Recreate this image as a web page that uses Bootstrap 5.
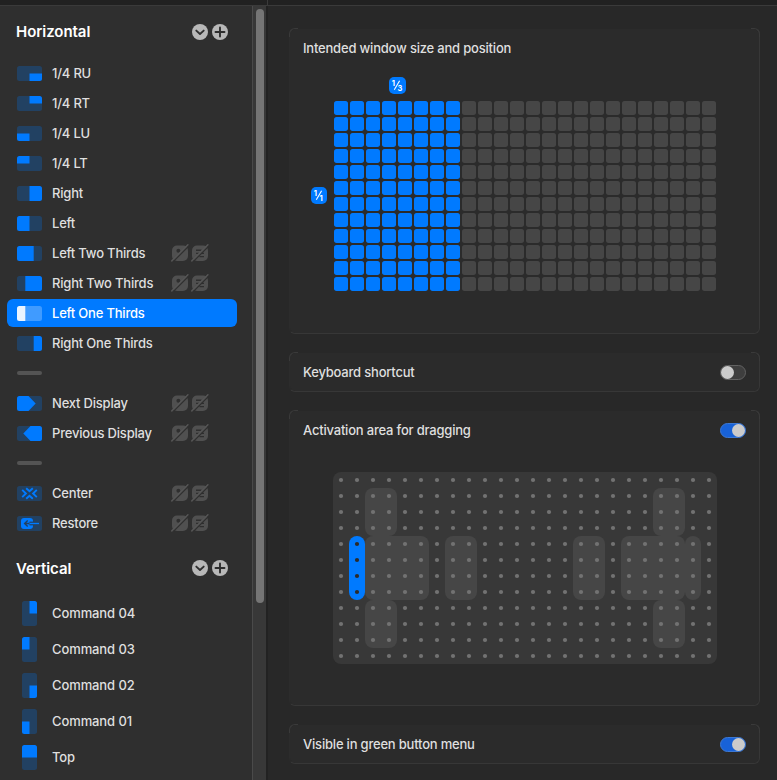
<!DOCTYPE html>
<html lang="en" data-bs-theme="dark">
<head>
<meta charset="utf-8">
<meta name="viewport" content="width=device-width, initial-scale=1">
<title>Window layouts</title>
<link href="https://cdn.jsdelivr.net/npm/bootstrap@5.3.0/dist/css/bootstrap.min.css" rel="stylesheet">
<style>
  body { font-family: Inter, "Liberation Sans", sans-serif; font-size: 13px; line-height: 16px; letter-spacing: -.2px; color: #dfdfdf; background: #282828; font-weight: 450; }
  svg { display: block; flex: none; }
  .titlebar { height: 6px; background: #212121; border-bottom: 1px solid #3a3a3a; }
  .titlebar-side { width: 268px; border-right: 1px solid #3a3a3a; }
  .sidebar { width: 253px; background: #2f2f2f; border-right: 1px solid #4a4a4a; }
  .track { width: 15px; background: #383838; border-right: 2px solid #222; padding: 3px 0 0 3px; }
  .thumb { width: 8px; height: 594px; border-radius: 4px; background: #757575; }
  .group-head { height: 52px; padding: 0 24px 1px 16px; }
  .group-head h2 { font-size: 15px; font-weight: 600; letter-spacing: -.05px; line-height: 20px; }
  .group-second { height: 57px; padding-top: 3px; }
  .group-second h2 { padding-top: 2px; }
  .action-row { height: 30px; padding: 0 43px 0 17px; gap: 10px; }
  .action-row.picked { height: 28px; margin: 1px 15px 1px 7px; padding: 0 0 0 10px; border-radius: 6px; background: #007aff; color: #fff; }
  .tall-row { height: 36px; padding-left: 22px; gap: 15px; letter-spacing: -.1px; }
  .divider { width: 25px; height: 4px; border-radius: 2px; background: #545454; }
  .pane { padding: 22px 17px 0 21px; gap: 18px; }
  .panel { width: 471px; background: #2b2b2b; border: 1px solid #373737; border-top-color: transparent; border-left-color: #2c2c2c; border-radius: 6px; background-clip: padding-box; }
  .panel-row { height: 38px; padding: 0 13px; }
  .corner-l, .corner-r { position: absolute; top: -1px; width: 9px; height: 9px; border-top: 1px solid #3a3a3a; }
  .corner-l { left: -1px; border-left: 1px solid #3a3a3a; border-top-left-radius: 6px; }
  .corner-r { right: -1px; border-right: 1px solid #3a3a3a; border-top-right-radius: 6px; }
  .size-panel { height: 306px; }
  .area-panel { height: 296px; }
  .switch { width: 26px; height: 15px; border-radius: 8px; background: #3e3e3e; border: 1px solid #626262; }
  .switch.on { background: #1862d8; border-color: #3d78d2; justify-content: flex-end; }
  .knob { width: 13px; height: 13px; border-radius: 50%; background: #cbcbcb; }
  .ratio-chip { width: 17px; height: 17px; border-radius: 5px; background: #007aff; letter-spacing: 0; }
  .chip-top { margin: 10px 0 7px 99px; }
  .chip-side { width: 16px; margin: 0 7px 3px 21px; }
  .area-map { margin: 23px 0 0 43px; }
</style>
</head>
<body class="vh-100 overflow-hidden d-flex flex-column">
<svg width="0" height="0" class="position-absolute" aria-hidden="true">
  <defs>
    <clipPath id="wide"><rect width="25" height="15" rx="2.5"/></clipPath>
    <clipPath id="tall"><rect width="15" height="25" rx="2.5"/></clipPath>
    <symbol id="head-icons" viewBox="0 0 36 16">
      <circle cx="8" cy="8" r="8" fill="#b8b8b8"/><circle cx="28" cy="8" r="8" fill="#b8b8b8"/>
      <path d="M4.3 6.6 8 10l3.7-3.4M28 3.5v9M23.5 8h9" fill="none" stroke="#2f2f2f" stroke-width="1.9" stroke-linecap="round" stroke-linejoin="round"/>
    </symbol>
    <symbol id="hidden-icons" viewBox="0 0 38 18">
      <g fill="#505050">
        <rect x="1" y="1.5" width="16" height="15.5" rx="5"/><rect x="21" y="1.5" width="16" height="15.5" rx="5"/>
      </g>
      <circle cx="7.4" cy="6.8" r="2" fill="#2f2f2f"/>
      <path d="M25 6.2h5.5M25 9.4h3.5M28.5 12.6h4.5M30 9.4h3" stroke="#2f2f2f" stroke-width="1.4"/>
      <path d="M1.5 18.3 18.5 1.3M21.5 18.3 38.5 1.3" stroke="#2f2f2f" stroke-width="1.3"/>
      <path d="M.8 16.9 16.9 .8M20.8 16.9 36.9 .8" stroke="#555" stroke-width="1.5" stroke-linecap="round"/>
    </symbol>
  </defs>
</svg>
<div class="titlebar d-flex flex-shrink-0"><div class="titlebar-side"></div></div>
<div class="d-flex flex-grow-1 overflow-hidden">
  <nav class="sidebar flex-shrink-0 overflow-hidden">
    <div class="group-head d-flex align-items-center justify-content-between"><h2 class="m-0">Horizontal</h2><svg width="36" height="16"><use href="#head-icons"/></svg></div>
    <div class="action-row d-flex align-items-center"><svg width="25" height="15"><g clip-path="url(#wide)"><path fill="#224162" d="M0 0h25v15H0z"/><path fill="#007aff" d="M12.5 7.5H25V15H12.5z"/></g></svg><span>1/4 RU</span></div>
    <div class="action-row d-flex align-items-center"><svg width="25" height="15"><g clip-path="url(#wide)"><path fill="#224162" d="M0 0h25v15H0z"/><path fill="#007aff" d="M12.5 0H25v7.5H12.5z"/></g></svg><span>1/4 RT</span></div>
    <div class="action-row d-flex align-items-center"><svg width="25" height="15"><g clip-path="url(#wide)"><path fill="#224162" d="M0 0h25v15H0z"/><path fill="#007aff" d="M0 7.5h12.5V15H0z"/></g></svg><span>1/4 LU</span></div>
    <div class="action-row d-flex align-items-center"><svg width="25" height="15"><g clip-path="url(#wide)"><path fill="#224162" d="M0 0h25v15H0z"/><path fill="#007aff" d="M0 0h12.5v7.5H0z"/></g></svg><span>1/4 LT</span></div>
    <div class="action-row d-flex align-items-center"><svg width="25" height="15"><g clip-path="url(#wide)"><path fill="#224162" d="M0 0h25v15H0z"/><path fill="#007aff" d="M12.5 0H25v15H12.5z"/></g></svg><span>Right</span></div>
    <div class="action-row d-flex align-items-center"><svg width="25" height="15"><g clip-path="url(#wide)"><path fill="#224162" d="M0 0h25v15H0z"/><path fill="#007aff" d="M0 0h12.5v15H0z"/></g></svg><span>Left</span></div>
    <div class="action-row d-flex align-items-center"><svg width="25" height="15"><g clip-path="url(#wide)"><path fill="#224162" d="M0 0h25v15H0z"/><path fill="#007aff" d="M0 0h16.7v15H0z"/></g></svg><span>Left Two Thirds</span><svg class="ms-auto" width="38" height="18"><use href="#hidden-icons"/></svg></div>
    <div class="action-row d-flex align-items-center"><svg width="25" height="15"><g clip-path="url(#wide)"><path fill="#224162" d="M0 0h25v15H0z"/><path fill="#007aff" d="M8.3 0H25v15H8.3z"/></g></svg><span>Right Two Thirds</span><svg class="ms-auto" width="38" height="18"><use href="#hidden-icons"/></svg></div>
    <div class="action-row picked d-flex align-items-center"><svg width="25" height="15"><g clip-path="url(#wide)"><path fill="#409bff" d="M0 0h25v15H0z"/><path fill="#ebf4ff" d="M0 0h8.3v15H0z"/></g></svg><span>Left One Thirds</span></div>
    <div class="action-row d-flex align-items-center"><svg width="25" height="15"><g clip-path="url(#wide)"><path fill="#224162" d="M0 0h25v15H0z"/><path fill="#007aff" d="M16.7 0H25v15h-8.3z"/></g></svg><span>Right One Thirds</span></div>
    <div class="action-row d-flex align-items-center"><div class="divider"></div></div>
    <div class="action-row d-flex align-items-center"><svg width="25" height="15"><g clip-path="url(#wide)"><path fill="#224162" d="M0 0h25v15H0z"/><path fill="#007aff" d="M0 0h11.5l7.2 7.5-7.2 7.5H0z"/></g></svg><span>Next Display</span><svg class="ms-auto" width="38" height="18"><use href="#hidden-icons"/></svg></div>
    <div class="action-row d-flex align-items-center"><svg width="25" height="15"><g clip-path="url(#wide)"><path fill="#224162" d="M0 0h25v15H0z"/><path fill="#007aff" d="M25 0H13.5L6.3 7.5l7.2 7.5H25z"/></g></svg><span>Previous Display</span><svg class="ms-auto" width="38" height="18"><use href="#hidden-icons"/></svg></div>
    <div class="action-row d-flex align-items-center"><div class="divider"></div></div>
    <div class="action-row d-flex align-items-center"><svg width="25" height="15"><rect width="25" height="15" rx="2.5" fill="#224162"/><path d="m9.2 2.2 3.3 3.1 3.3-3.1M9.2 12.8l3.3-3.1 3.3 3.1M5.2 3.9l3.7 3.6-3.7 3.6M19.8 3.9l-3.7 3.6 3.7 3.6" fill="none" stroke="#007aff" stroke-width="1.9"/></svg><span>Center</span><svg class="ms-auto" width="38" height="18"><use href="#hidden-icons"/></svg></div>
    <div class="action-row d-flex align-items-center"><svg width="25" height="15"><rect width="25" height="15" rx="2.5" fill="#224162"/><rect x="4" y="2" width="12" height="11" rx="3" fill="#007aff"/><path d="M12.5 5.6H17v3.8h-4.5z" fill="#224162"/><path d="M10.7 4.4 7.6 7.5l3.1 3.1M8 7.5h5" fill="none" stroke="#224162" stroke-width="1.4"/><path d="M12.5 7.5H22" stroke="#007aff" stroke-width="1.3"/></svg><span>Restore</span><svg class="ms-auto" width="38" height="18"><use href="#hidden-icons"/></svg></div>
    <div class="group-head group-second d-flex align-items-center justify-content-between"><h2 class="m-0">Vertical</h2><svg width="36" height="16"><use href="#head-icons"/></svg></div>
    <div class="tall-row d-flex align-items-center"><svg width="15" height="25"><g clip-path="url(#tall)"><path fill="#224162" d="M0 0h15v25H0z"/><path fill="#007aff" d="M7.5 0H15v12.5H7.5z"/></g></svg><span>Command 04</span></div>
    <div class="tall-row d-flex align-items-center"><svg width="15" height="25"><g clip-path="url(#tall)"><path fill="#224162" d="M0 0h15v25H0z"/><path fill="#007aff" d="M0 0h7.5v12.5H0z"/></g></svg><span>Command 03</span></div>
    <div class="tall-row d-flex align-items-center"><svg width="15" height="25"><g clip-path="url(#tall)"><path fill="#224162" d="M0 0h15v25H0z"/><path fill="#007aff" d="M7.5 12.5H15V25H7.5z"/></g></svg><span>Command 02</span></div>
    <div class="tall-row d-flex align-items-center"><svg width="15" height="25"><g clip-path="url(#tall)"><path fill="#224162" d="M0 0h15v25H0z"/><path fill="#007aff" d="M0 12.5h7.5V25H0z"/></g></svg><span>Command 01</span></div>
    <div class="tall-row d-flex align-items-center"><svg width="15" height="25"><g clip-path="url(#tall)"><path fill="#224162" d="M0 0h15v25H0z"/><path fill="#007aff" d="M0 0h15v12.5H0z"/></g></svg><span>Top</span></div>
  </nav>
  <div class="track flex-shrink-0"><div class="thumb"></div></div>
  <main class="pane d-flex flex-column flex-grow-1">
    <section class="panel size-panel position-relative flex-shrink-0">
      <i class="corner-l"></i><i class="corner-r"></i>
      <div class="panel-row d-flex align-items-center"><span>Intended window size and position</span></div>
      <div class="ratio-chip chip-top">
        <svg width="17" height="17" fill="#fff" font-size="7.5" font-weight="700"><text x="2.7" y="8.6">1</text><text x="8.6" y="14">3</text><path d="M5.3 12.8 10.6 3.8" stroke="#fff" stroke-width="1.1"/></svg>
      </div>
      <div class="d-flex align-items-center">
        <div class="ratio-chip chip-side flex-shrink-0">
          <svg width="16" height="17" fill="#fff" font-size="7.5" font-weight="700"><text x="2.7" y="8.6">1</text><text x="8.6" y="14">1</text><path d="M5.3 12.8 10.6 3.8" stroke="#fff" stroke-width="1.1"/></svg>
        </div>
        <svg width="384" height="192">
          <defs>
            <pattern id="cell" width="16" height="16" patternUnits="userSpaceOnUse"><rect width="14" height="14" rx="2.7" fill="#464646"/></pattern>
            <pattern id="cell-on" width="16" height="16" patternUnits="userSpaceOnUse"><rect width="14" height="14" rx="2.7" fill="#007aff"/></pattern>
          </defs>
          <path d="M128 0h256v192H128z" fill="url(#cell)"/><path d="M0 0h128v192H0z" fill="url(#cell-on)"/>
        </svg>
      </div>
    </section>
    <section class="panel position-relative flex-shrink-0">
      <i class="corner-l"></i><i class="corner-r"></i>
      <div class="panel-row d-flex align-items-center justify-content-between"><span>Keyboard shortcut</span><div class="switch d-flex"><div class="knob"></div></div></div>
    </section>
    <section class="panel area-panel position-relative flex-shrink-0">
      <i class="corner-l"></i><i class="corner-r"></i>
      <div class="panel-row d-flex align-items-center justify-content-between"><span>Activation area for dragging</span><div class="switch on d-flex"><div class="knob"></div></div></div>
      <svg class="area-map" width="384" height="192">
        <defs><pattern id="dots" width="16" height="16" patternUnits="userSpaceOnUse"><circle cx="8" cy="8" r="2.1" fill="#727272"/></pattern></defs>
        <rect width="384" height="192" rx="8" fill="#383838"/>
        <g fill="#464646">
          <rect x="32" y="16" width="32" height="48" rx="8"/><rect x="32" y="64" width="64" height="64" rx="8"/><rect x="32" y="128" width="32" height="48" rx="8"/>
          <rect x="112" y="64" width="32" height="64" rx="8"/><rect x="240" y="64" width="32" height="64" rx="8"/>
          <rect x="288" y="64" width="64" height="64" rx="8"/><rect x="352" y="64" width="16" height="64" rx="8"/>
          <rect x="320" y="16" width="32" height="48" rx="8"/><rect x="320" y="128" width="32" height="48" rx="8"/>
        </g>
        <rect width="384" height="192" fill="url(#dots)"/>
        <rect x="16" y="64" width="16" height="64" rx="8" fill="#007aff"/>
        <g fill="#2b2b2b"><circle cx="24" cy="72" r="2.1"/><circle cx="24" cy="88" r="2.1"/><circle cx="24" cy="104" r="2.1"/><circle cx="24" cy="120" r="2.1"/></g>
      </svg>
    </section>
    <section class="panel position-relative flex-shrink-0">
      <i class="corner-l"></i><i class="corner-r"></i>
      <div class="panel-row d-flex align-items-center justify-content-between"><span>Visible in green button menu</span><div class="switch on d-flex"><div class="knob"></div></div></div>
    </section>
  </main>
</div>
<script src="https://cdn.jsdelivr.net/npm/bootstrap@5.3.0/dist/js/bootstrap.bundle.min.js"></script>
</body>
</html>
